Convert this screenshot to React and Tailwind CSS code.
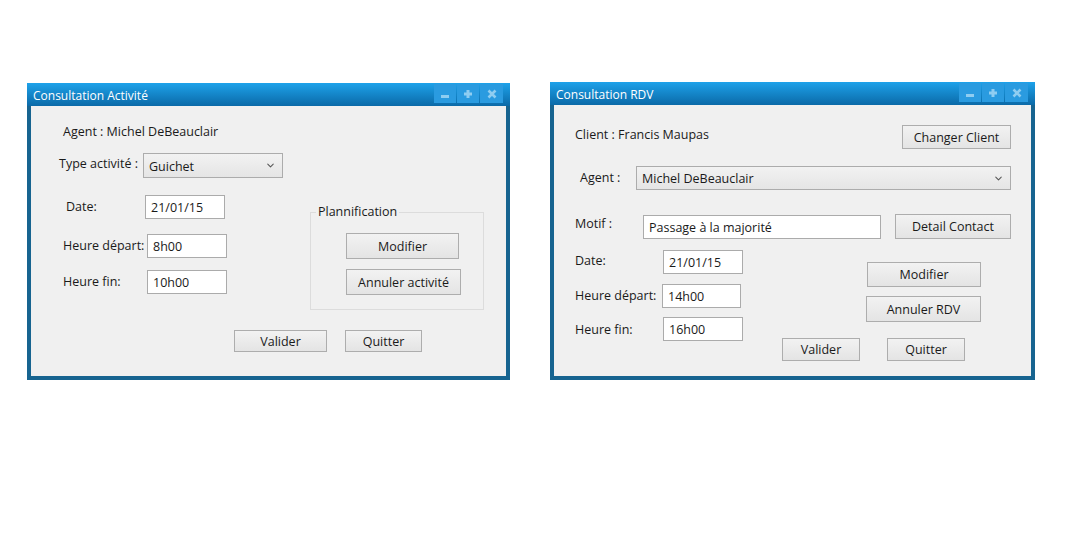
import { ChevronDown } from 'lucide-react';

const font = { fontFamily: '"Open Sans", "Noto Sans", sans-serif' };

function TitleButtons() {
  return (
    <div className="mr-[7px] mt-px flex h-[19px] gap-px self-start">
      <div className="flex w-[22px] items-end justify-center bg-[#2a9be0] pb-[5px]">
        <div className="h-[3px] w-[8px] bg-[#8fcdf1]" />
      </div>
      <div className="flex w-[22px] items-center justify-center bg-[#2a9be0]">
        <svg width="10" height="10" viewBox="0 0 10 10">
          <path d="M5 1v8M1 5h8" stroke="#8fcdf1" strokeWidth="3" />
        </svg>
      </div>
      <div className="flex w-[23px] items-center justify-center bg-[#2a9be0]">
        <svg width="10" height="10" viewBox="0 0 10 10">
          <path d="M1.5 1.5l7 7M8.5 1.5l-7 7" stroke="#8fcdf1" strokeWidth="2.6" />
        </svg>
      </div>
    </div>
  );
}

function Window({ title, className, children }) {
  return (
    <div className={`absolute flex flex-col bg-[#176490] ${className}`}>
      <div className="flex h-[23px] shrink-0 items-center justify-between bg-gradient-to-b from-[#1ea2ea] to-[#0b6aa8]">
        <span className="pl-[6px] pt-[2px] text-[12px] leading-4 text-white">{title}</span>
        <TitleButtons />
      </div>
      <div className="mx-[4px] mb-[4px] flex-1 bg-[#f0f0f0] text-[12.5px] leading-4 text-[#1a1a1a]">
        {children}
      </div>
    </div>
  );
}

function Field({ value, className }) {
  return (
    <div className={`flex h-[24px] items-center border border-[#ababab] bg-white pl-[5px] pt-px ${className}`}>
      {value}
    </div>
  );
}

function Button({ label, className }) {
  return (
    <div className={`flex items-center justify-center border border-[#adadad] bg-gradient-to-b from-[#f2f2f2] to-[#e4e4e4] pt-px ${className}`}>
      {label}
    </div>
  );
}

function Select({ value, className }) {
  return (
    <div className={`flex items-center justify-between border border-[#acacac] bg-gradient-to-b from-[#f2f2f2] to-[#e5e5e5] pl-[5px] pr-[6px] ${className}`}>
      <span className="pt-[2px]">{value}</span>
      <ChevronDown size={11} strokeWidth={2.2} color="#555" />
    </div>
  );
}

export default function App() {
  return (
    <div className="relative h-[542px] w-[1076px] bg-white" style={font}>
      <Window title="Consultation Activité" className="left-[27px] top-[83px] h-[297px] w-[483px]">
        <div className="pl-[32px] pt-[18px]">Agent : Michel DeBeauclair</div>
        <div className="mt-[13px] flex items-start pl-[28px]">
          <span className="w-[84px] pt-[3px]">Type activité :</span>
          <Select value="Guichet" className="h-[25px] w-[140px]" />
        </div>
        <div className="mt-[17px] flex items-start">
          <div className="flex w-[196px] flex-col">
            <div className="flex items-center pl-[35px]">
              <span className="w-[79px] -mt-[1px]">Date:</span>
              <Field value="21/01/15" className="w-[80px]" />
            </div>
            <div className="mt-[15px] flex items-center pl-[32px]">
              <span className="w-[84px] -mt-[1px]">Heure départ:</span>
              <Field value="8h00" className="w-[80px]" />
            </div>
            <div className="mt-[12px] flex items-center pl-[32px]">
              <span className="w-[84px] -mt-[1px]">Heure fin:</span>
              <Field value="10h00" className="w-[80px]" />
            </div>
          </div>
          <div className="relative ml-[83px] mt-[17px] flex h-[98px] w-[174px] flex-col border border-[#dcdcdc] pl-[35px] pt-[20px]">
            <span className="absolute -top-[9px] left-[5px] bg-[#f0f0f0] px-[2px]">Plannification</span>
            <Button label="Modifier" className="h-[26px] w-[113px]" />
            <Button label="Annuler activité" className="mt-[10px] h-[26px] w-[115px]" />
          </div>
        </div>
        <div className="mt-[20px] flex gap-[18px] pl-[203px]">
          <Button label="Valider" className="h-[22px] w-[93px]" />
          <Button label="Quitter" className="h-[22px] w-[77px]" />
        </div>
      </Window>

      <Window title="Consultation RDV" className="left-[550px] top-[82px] h-[298px] w-[485px]">
        <div className="mt-[20px] flex items-start justify-between pl-[21px] pr-[20px]">
          <span className="pt-[2px]">Client : Francis Maupas</span>
          <Button label="Changer Client" className="h-[24px] w-[109px]" />
        </div>
        <div className="mt-[17px] flex items-center pl-[26px] pr-[20px]">
          <span className="w-[56px] -mt-[1px]">Agent :</span>
          <Select value="Michel DeBeauclair" className="h-[24px] flex-1" />
        </div>
        <div className="mt-[24px] flex items-start pl-[21px]">
          <span className="w-[68px] pt-[2px]">Motif :</span>
          <Field value="Passage à la majorité" className="mt-px w-[238px]" />
          <Button label="Detail Contact" className="ml-[14px] h-[25px] w-[116px]" />
        </div>
        <div className="mt-[11px] flex items-start">
          <div className="flex w-[189px] flex-col pl-[21px]">
            <div className="flex items-start">
              <span className="w-[88px] pt-[3px]">Date:</span>
              <Field value="21/01/15" className="w-[80px]" />
            </div>
            <div className="mt-[10px] flex items-start">
              <span className="w-[87px] pt-[4px]">Heure départ:</span>
              <Field value="14h00" className="w-[79px]" />
            </div>
            <div className="mt-[9px] flex items-start">
              <span className="w-[88px] pt-[5px]">Heure fin:</span>
              <Field value="16h00" className="w-[80px]" />
            </div>
          </div>
          <div className="ml-[39px] mt-[12px] flex flex-col">
            <Button label="Modifier" className="ml-[85px] h-[25px] w-[114px]" />
            <Button label="Annuler RDV" className="ml-[84px] mt-[9px] h-[26px] w-[115px]" />
            <div className="mt-[16px] flex gap-[27px]">
              <Button label="Valider" className="h-[23px] w-[78px]" />
              <Button label="Quitter" className="h-[23px] w-[78px]" />
            </div>
          </div>
        </div>
      </Window>
    </div>
  );
}
